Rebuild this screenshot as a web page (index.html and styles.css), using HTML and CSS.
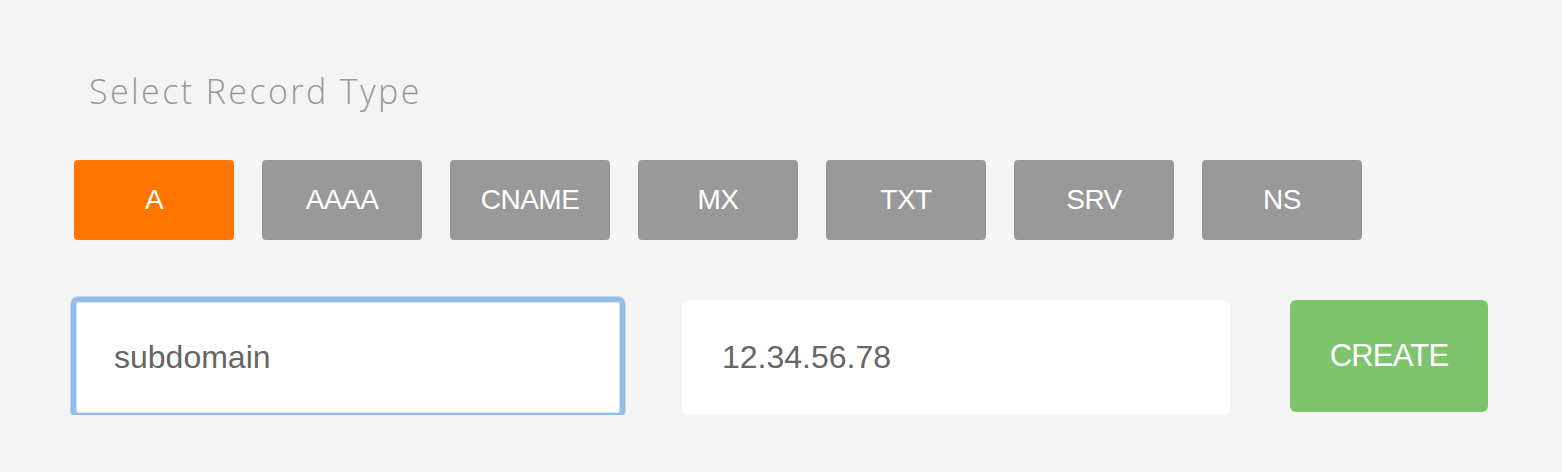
FILE: index.html
```html
<!DOCTYPE html>
<html>
<head>
<meta charset="utf-8">
<link rel="stylesheet" href="styles.css">
</head>
<body>
<div class="panel">
  <h2 class="title">Select Record Type</h2>
  <div class="types">
    <button class="type active">A</button>
    <button class="type">AAAA</button>
    <button class="type">CNAME</button>
    <button class="type">MX</button>
    <button class="type">TXT</button>
    <button class="type">SRV</button>
    <button class="type">NS</button>
  </div>
  <div class="form">
    <div class="field focus">subdomain</div>
    <div class="field">12.34.56.78</div>
    <button class="create">CREATE</button>
  </div>
</div>
</body>
</html>
```
FILE: styles.css
```css
html, body {
  margin: 0;
  padding: 0;
  background: #f4f4f4;
}
.panel {
  padding: 65px 0 0 74px;
  font-family: "Liberation Sans", Arial, sans-serif;
}
.title {
  margin: 0 0 0 15px;
  height: 95px;
  font-family: "Open Sans", "Liberation Sans", sans-serif;
  font-weight: 300;
  font-size: 34px;
  line-height: 52px;
  color: #999;
  letter-spacing: 2.4px;
}
.types {
  display: flex;
  gap: 28px;
}
.type {
  width: 160px;
  height: 80px;
  border: none;
  border-radius: 4px;
  background: #999;
  color: #fff;
  font-family: "Liberation Sans", Arial, sans-serif;
  font-size: 28px;
  letter-spacing: -0.5px;
  padding: 0;
}
.type.active {
  background: #ff7500;
}
.form {
  display: flex;
  gap: 60px;
  margin-top: 60px;
  align-items: flex-start;
}
.field {
  box-sizing: border-box;
  width: 548px;
  height: 115px;
  background: #fff;
  border-radius: 6px;
  padding-left: 40px;
  display: flex;
  align-items: center;
  font-size: 32px;
  color: #666;
}
.field.focus {
  border-radius: 4px;
  box-shadow: 0 0 0 3px #93bde6, 0 0 0 4px #c4d9f0, inset 0 0 0 2px #93bde6, inset 0 0 0 3px #d3e3f4;
}
.create {
  width: 198px;
  height: 112px;
  border: none;
  border-radius: 6px;
  background: #7dc46d;
  color: #fff;
  font-family: "Liberation Sans", Arial, sans-serif;
  font-size: 31px;
  letter-spacing: -0.8px;
  padding: 0;
}
```
